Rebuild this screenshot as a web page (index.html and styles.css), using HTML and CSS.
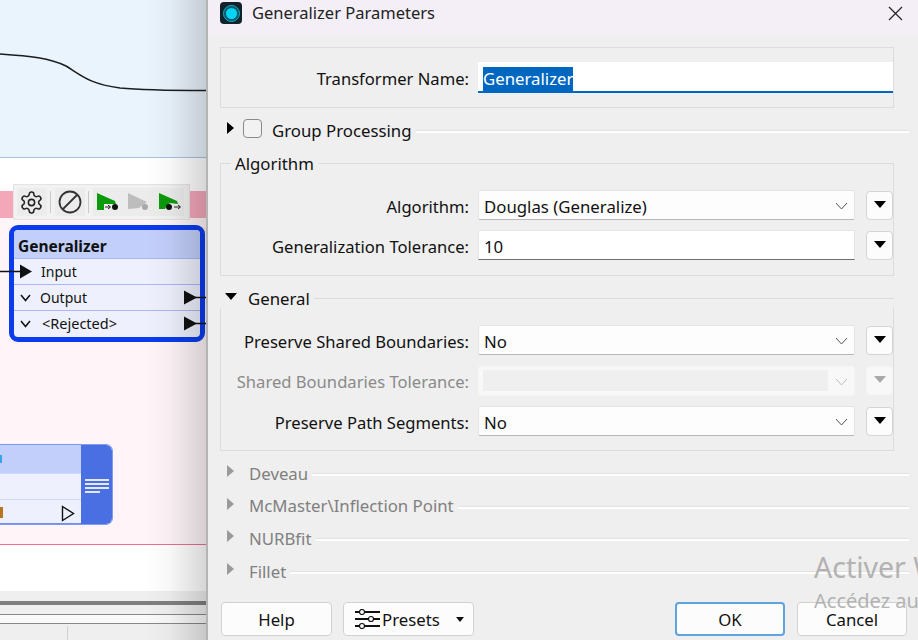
FILE: index.html
```html
<!DOCTYPE html>
<html lang="en">
<head>
    <meta charset="UTF-8">
    <title>Generalizer Parameters</title>
    <link rel="stylesheet" href="styles.css">
</head>
<body>
<div class="desktop">

    <!-- workbench canvas behind the dialog -->
    <div class="canvas">
        <div class="band-blue"></div>
        <div class="band-white"></div>
        <div class="band-pink"></div>
        <div class="band-bookmark"></div>
        <div class="band-white2"></div>
        <div class="band-gray"></div>
        <div class="band-dark"></div>
        <div class="band-gray2"></div>
        <div class="band-light"></div>
        <div class="band-status"><span></span></div>

        <svg class="wires" width="208" height="640" viewBox="0 0 208 640">
            <path d="M0 54 C30 56 50 58 66 66 C82 76 90 84 120 88 C140 90 170 90.5 208 90.5" fill="none" stroke="#1c1c1c" stroke-width="1.5"/>
        </svg>

        <div class="toolbar">
            <div class="tool">
                <svg width="25" height="25" viewBox="0 0 24 24" fill="none" stroke="#222" stroke-width="1.5">
                    <path d="M12.22 2h-.44a2 2 0 0 0-2 2v.18a2 2 0 0 1-1 1.73l-.43.25a2 2 0 0 1-2 0l-.15-.08a2 2 0 0 0-2.73.73l-.22.38a2 2 0 0 0 .73 2.73l.15.1a2 2 0 0 1 1 1.72v.51a2 2 0 0 1-1 1.74l-.15.09a2 2 0 0 0-.73 2.73l.22.38a2 2 0 0 0 2.73.73l.15-.08a2 2 0 0 1 2 0l.43.25a2 2 0 0 1 1 1.73V20a2 2 0 0 0 2 2h.44a2 2 0 0 0 2-2v-.18a2 2 0 0 1 1-1.73l.43-.25a2 2 0 0 1 2 0l.15.08a2 2 0 0 0 2.73-.73l.22-.39a2 2 0 0 0-.73-2.73l-.15-.08a2 2 0 0 1-1-1.74v-.5a2 2 0 0 1 1-1.74l.15-.09a2 2 0 0 0 .73-2.73l-.22-.38a2 2 0 0 0-2.73-.73l-.15.08a2 2 0 0 1-2 0l-.43-.25a2 2 0 0 1-1-1.73V4a2 2 0 0 0-2-2z"/>
                    <circle cx="12" cy="12" r="3"/>
                </svg>
            </div>
            <div class="tool-sep"></div>
            <div class="tool">
                <svg width="24" height="24" viewBox="0 0 24 24" fill="none" stroke="#333" stroke-width="1.8">
                    <circle cx="12" cy="12" r="10.5"/>
                    <path d="M5 19 L19 5"/>
                </svg>
            </div>
            <div class="tool-sep"></div>
            <div class="tool-group">
                <svg width="26" height="20" viewBox="0 0 26 20">
                    <path d="M1 1 L19 9 L20 12 L8 12 L8 18 L1 18 Z" fill="#0b9a0b"/>
                    <path d="M9 15 H14 M12 13 L14.500 15 L12 17" fill="none" stroke="#222" stroke-width="1"/>
                    <circle cx="19" cy="15" r="3" fill="#111"/>
                </svg>
                <svg width="26" height="20" viewBox="0 0 26 20">
                    <path d="M1 1 L20 10 L12 16 L1 17 Z" fill="#bdbdbd"/>
                    <circle cx="18" cy="15" r="3" fill="#a8a8a8"/>
                </svg>
                <svg width="26" height="20" viewBox="0 0 26 20">
                    <path d="M1 1 L19 9 L20 12 L12 11 L8 15 L7 17 L1 17 Z" fill="#0b9a0b"/>
                    <circle cx="11" cy="15" r="3" fill="#111"/>
                    <path d="M16 15 H22 M20 13 L22.500 15 L20 17" fill="none" stroke="#222" stroke-width="1"/>
                </svg>
            </div>
        </div>

        <div class="node node-main">
            <div class="node-title">Generalizer</div>
            <div class="port"><span class="port-name port-in">Input</span></div>
            <div class="port">
                <svg class="chev" width="11" height="8" viewBox="0 0 11 8"><path d="M1 1 L5.500 6.500 L10 1" fill="none" stroke="#111" stroke-width="1.500"/></svg>
                <span class="port-name">Output</span>
            </div>
            <div class="port">
                <svg class="chev" width="11" height="8" viewBox="0 0 11 8"><path d="M1 1 L5.500 6.500 L10 1" fill="none" stroke="#111" stroke-width="1.500"/></svg>
                <span class="port-name port-rej">&lt;Rejected&gt;</span>
            </div>
        </div>
        <svg class="wires" width="208" height="640" viewBox="0 0 208 640">
            <path d="M0 271.500 H22 M190 297.500 H208 M190 323.500 H208" stroke="#111" stroke-width="1.500"/>
            <path d="M20 264.500 L32 271.500 L20 278.500 Z M184 290.500 L197 297.500 L184 304.500 Z M184 316.500 L197 323.500 L184 330.500 Z" fill="#111"/>
        </svg>

        <div class="node-cut">
            <div class="cut-main">
                <div class="cut-title"><span class="speck-blue"></span></div>
                <div class="cut-row"></div>
                <div class="cut-row cut-last">
                    <span class="speck-orange"></span>
                    <svg width="14" height="17" viewBox="0 0 14 17"><path d="M1.500 1.500 L12.500 8.500 L1.500 15.500 Z" fill="none" stroke="#111" stroke-width="1.400"/></svg>
                </div>
            </div>
            <div class="cut-side">
                <span></span><span></span><span></span><span class="short"></span>
            </div>
        </div>

        <div class="shade"></div>
    </div>

    <!-- parameters dialog -->
    <div class="dialog">
        <div class="titlebar">
            <div class="app-icon"><span></span></div>
            <div class="title-text">Generalizer Parameters</div>
            <svg class="close" width="15" height="15" viewBox="0 0 15 15"><path d="M1 1 L14 14 M14 1 L1 14" stroke="#222" stroke-width="1.200"/></svg>
        </div>

        <div class="content">
            <div class="box box-name">
                <label class="lbl">Transformer Name:</label>
                <div class="name-input"><span class="selected">Generalizer</span></div>
            </div>

            <div class="section sec-group">
                <span class="arrow-right"></span>
                <span class="checkbox"></span>
                <span class="sec-label sec-dark">Group Processing</span>
                <span class="sec-line"></span>
            </div>

            <div class="box box-algo">
                <div class="legend">Algorithm</div>
                <div class="row">
                    <label class="lbl">Algorithm:</label>
                    <div class="field select">Douglas (Generalize)<svg class="chevron" width="13" height="8" viewBox="0 0 13 8"><path d="M1 1 L6.500 7 L12 1" fill="none" stroke="#555" stroke-width="1"/></svg></div>
                    <div class="menu-btn"><span class="arrow-down"></span></div>
                </div>
                <div class="row">
                    <label class="lbl">Generalization Tolerance:</label>
                    <div class="field text">10</div>
                    <div class="menu-btn"><span class="arrow-down"></span></div>
                </div>
            </div>

            <div class="section sec-general">
                <span class="arrow-open"></span>
                <span class="sec-label sec-dark">General</span>
                <span class="sec-rule"></span>
            </div>
            <div class="box box-general">
                <div class="row">
                    <label class="lbl">Preserve Shared Boundaries:</label>
                    <div class="field select">No<svg class="chevron" width="13" height="8" viewBox="0 0 13 8"><path d="M1 1 L6.500 7 L12 1" fill="none" stroke="#555" stroke-width="1"/></svg></div>
                    <div class="menu-btn"><span class="arrow-down"></span></div>
                </div>
                <div class="row">
                    <label class="lbl lbl-off">Shared Boundaries Tolerance:</label>
                    <div class="field select field-off"><span class="off-fill"></span><svg class="chevron" width="13" height="8" viewBox="0 0 13 8"><path d="M1 1 L6.500 7 L12 1" fill="none" stroke="#bbb" stroke-width="1"/></svg></div>
                    <div class="menu-btn btn-off"><span class="arrow-down"></span></div>
                </div>
                <div class="row">
                    <label class="lbl">Preserve Path Segments:</label>
                    <div class="field select">No<svg class="chevron" width="13" height="8" viewBox="0 0 13 8"><path d="M1 1 L6.500 7 L12 1" fill="none" stroke="#555" stroke-width="1"/></svg></div>
                    <div class="menu-btn"><span class="arrow-down"></span></div>
                </div>
            </div>

            <div class="collapsed">
                <div class="section"><span class="arrow-right arrow-off"></span><span class="sec-label">Deveau</span><span class="sec-line"></span></div>
                <div class="section"><span class="arrow-right arrow-off"></span><span class="sec-label">McMaster\Inflection Point</span><span class="sec-line"></span></div>
                <div class="section"><span class="arrow-right arrow-off"></span><span class="sec-label">NURBfit</span><span class="sec-line"></span></div>
                <div class="section"><span class="arrow-right arrow-off"></span><span class="sec-label">Fillet</span><span class="sec-line"></span></div>
            </div>

            <div class="footer">
                <button class="btn btn-help">Help</button>
                <button class="btn btn-presets">
                    <svg width="25" height="20" viewBox="0 0 25 20" fill="none" stroke="#111">
                        <path d="M0 3 H25 M0 10 H25 M0 17 H25" stroke-width="2"/>
                        <circle cx="7" cy="3" r="2.500" fill="#fff" stroke-width="1.200"/>
                        <circle cx="16" cy="10" r="2.500" fill="#fff" stroke-width="1.200"/>
                        <circle cx="7" cy="17" r="2.500" fill="#fff" stroke-width="1.200"/>
                    </svg>
                    <span>Presets</span>
                    <span class="caret"></span>
                </button>
                <div class="spacer"></div>
                <button class="btn btn-ok">OK</button>
                <button class="btn btn-cancel">Cancel</button>
            </div>
        </div>

        <div class="watermark">
            <div class="wm-big">Activer W</div>
            <div class="wm-small">Accédez au</div>
        </div>
    </div>
</div>
</body>
</html>
```

FILE: styles.css
```css
* {
    box-sizing: border-box;
}
html, body {
    margin: 0;
    padding: 0;
}
body {
    font-family: "Noto Sans", "Open Sans", sans-serif;
    font-size: 16px;
    color: #111;
    background-color: #efefef;
    overflow: hidden;
}
.desktop {
    display: flex;
    width: 918px;
    height: 640px;
    overflow: hidden;
}

/* canvas */
.canvas {
    position: relative;
    display: flex;
    flex-direction: column;
    flex: none;
    width: 208px;
    height: 640px;
    overflow: hidden;
    border-right: 2px solid #b4b4b4;
}
.band-blue {
    height: 158px;
    background-color: #eaf4fd;
    border-bottom: 1px solid #a5c3e0;
}
.band-white {
    height: 33px;
    background-color: #fff;
}
.band-pink {
    height: 27px;
    background-color: #f5a7ba;
}
.band-bookmark {
    height: 327px;
    background-color: #fff5f8;
    border-bottom: 1px solid #ee6d90;
}
.band-white2 {
    height: 46px;
    background-color: #fff;
}
.band-gray {
    height: 10px;
    background-color: #efefef;
}
.band-dark {
    height: 4px;
    background-color: #808080;
}
.band-gray2 {
    height: 10px;
    background-color: #f0f0f0;
    border-bottom: 1px solid #888;
}
.band-light {
    height: 9px;
    background-color: #f9f9f9;
    border-bottom: 1px solid #888;
}
.band-status {
    flex: 1;
    background-color: #efefef;
    padding-left: 67px;
    padding-top: 2px;
}
.band-status span {
    display: block;
    width: 1px;
    height: 14px;
    background-color: #d0d0d0;
}
.wires {
    position: absolute;
    left: 0;
    top: 0;
    z-index: 3;
}
.shade {
    position: absolute;
    top: 0;
    right: 0;
    bottom: 0;
    width: 60px;
    z-index: 4;
    background: linear-gradient(to right, rgba(0,0,0,0), rgba(0,0,0,0.03) 40%, rgba(0,0,0,0.16));
}

.toolbar {
    position: absolute;
    left: 13px;
    top: 184px;
    width: 177px;
    height: 36px;
    display: flex;
    align-items: center;
    padding: 3px;
    background-color: #f2f2f2;
    border: 1px solid #e4e4e4;
}
.tool {
    width: 30px;
    height: 28px;
    display: flex;
    align-items: center;
    justify-content: center;
    background-color: #ececec;
}
.tool:first-child svg {
    margin-left: -2px;
}
.tool-sep {
    width: 1px;
    height: 22px;
    margin: 0 4px 0 3px;
    background-color: #c8c8c8;
}
.tool-group {
    display: flex;
    align-items: center;
    gap: 5px;
    height: 28px;
    padding-left: 3px;
    background-color: #ececec;
}

.node {
    position: absolute;
    left: 9px;
    top: 225px;
    width: 196px;
    height: 117px;
    background-color: #eef1fd;
    border: 5px solid #0a3ced;
    border-radius: 9px;
    overflow: hidden;
}
.node-title {
    height: 29px;
    padding: 5px 0 0 4px;
    font-size: 15.500px;
    font-weight: 700;
    line-height: 22px;
    background-color: #c3cffb;
    border-bottom: 1px solid #a8b8f5;
}
.port {
    display: flex;
    align-items: center;
    height: 26px;
    font-size: 14px;
    border-bottom: 1px solid #a8b8f5;
}
.port:last-child {
    border-bottom: none;
}
.chev {
    margin-left: 6px;
}
.port-name {
    position: absolute;
    left: 26px;
}
.port-in {
    left: 27px;
}
.port-rej {
    left: 28px;
    margin-top: -2px;
    font-size: 14.500px;
}

.node-cut {
    position: absolute;
    left: -10px;
    top: 444px;
    width: 123px;
    height: 81px;
    display: flex;
    border: 1px solid #7f9bef;
    border-radius: 0 7px 7px 0;
    overflow: hidden;
}
.cut-main {
    position: relative;
    flex: 1;
    background-color: #eef1fd;
    border-bottom: 1px solid #6f8ee8;
}
.cut-title {
    height: 29px;
    background-color: #c3cffb;
    border-bottom: 1px solid #cfd8fa;
}
.cut-row {
    height: 26px;
    border-bottom: 1px solid #cfd8fa;
}
.cut-last {
    display: flex;
    align-items: center;
    justify-content: flex-end;
    padding-right: 6px;
    border-bottom: none;
}
.speck-blue {
    position: absolute;
    left: 9px;
    top: 10px;
    width: 2px;
    height: 8px;
    background-color: #3aa0f0;
}
.speck-orange {
    position: absolute;
    left: 9px;
    top: 62px;
    width: 3px;
    height: 11px;
    background-color: #b8741e;
}
.cut-side {
    width: 31px;
    display: flex;
    flex-direction: column;
    gap: 2px;
    padding: 34px 3px 0 4px;
    background-color: #4a6fe3;
}
.cut-side span {
    display: block;
    height: 2px;
    background-color: #e4e8f5;
}
.cut-side .short {
    width: 15px;
}

/* dialog */
.dialog {
    position: relative;
    flex: 1;
    min-width: 0;
    background-color: #efefef;
}
.titlebar {
    display: flex;
    align-items: center;
    height: 35px;
    padding: 0 15px 9px 12px;
    background-color: #f4eff7;
}
.app-icon {
    width: 22px;
    height: 22px;
    display: flex;
    align-items: center;
    justify-content: center;
    background-color: #10232b;
    border-radius: 4px;
}
.app-icon span {
    width: 15px;
    height: 15px;
    border-radius: 50%;
    background-color: #05d5f5;
    border: 2px solid #0a5e70;
    outline: 1px solid #0bb8d4;
}
.title-text {
    flex: 1;
    margin: -2px 0 0 10px;
    font-size: 16.500px;
    color: #222;
}
.content {
    padding: 12px 24px 0 12px;
}
.box {
    border: 1px solid #dcdcdc;
    width: 674px;
}
.lbl {
    flex: none;
    width: 248px;
    margin-top: 2px;
    text-align: right;
    font-size: 16.600px;
    white-space: nowrap;
}
.lbl-off {
    color: #8a8a8a;
}
.box-name {
    display: flex;
    align-items: center;
    height: 61px;
}
.name-input {
    width: 415px;
    height: 31px;
    margin-left: 9px;
    padding: 5px 0 0 5px;
    font-size: 16.800px;
    background-color: #fff;
    border-bottom: 2px solid #0067c0;
}
.selected {
    background-color: #0067c0;
    color: #fff;
    display: inline-block;
    height: 24px;
    line-height: 24px;
}
.section {
    display: flex;
    align-items: center;
    position: relative;
    height: 22px;
    width: 689px;
    padding-left: 29px;
    font-size: 16.800px;
}
.sec-group {
    margin-top: 11px;
    padding-left: 23px;
}
.sec-label {
    color: #808080;
    white-space: nowrap;
}
.sec-dark {
    color: #111;
}
.sec-line {
    flex: 1;
    height: 3px;
    margin: 3px 0 0 4px;
    background-color: #fff;
    border-top: 1px solid #e2e2e2;
}
.arrow-right {
    position: absolute;
    left: 7px;
    top: 3px;
    border-left: 7px solid #000;
    border-top: 6px solid transparent;
    border-bottom: 6px solid transparent;
}
.arrow-off {
    border-left-color: #9a9a9a;
}
.checkbox {
    align-self: flex-start;
    width: 19px;
    height: 19px;
    margin-right: 10px;
    border: 1px solid #8a8a8a;
    border-radius: 4px;
    background-color: #f2f2f2;
}
.box-algo {
    position: relative;
    height: 113px;
    margin-top: 22px;
    padding-top: 26px;
}
.legend {
    position: absolute;
    left: 10px;
    top: -11px;
    padding: 0 5px 0 4px;
    font-size: 16.800px;
    line-height: 22px;
    background-color: #efefef;
}
.row {
    display: flex;
    align-items: center;
    height: 30px;
    margin-bottom: 10px;
}
.field {
    position: relative;
    width: 377px;
    height: 30px;
    margin-left: 9px;
    padding: 1px 0 0 5px;
    font-size: 16.800px;
    line-height: 29px;
    background-color: #fdfdfd;
    border: 1px solid #e4e4e4;
    border-bottom: 1px solid #b8b8b8;
    border-radius: 2px;
}
.text {
    background-color: #fff;
    border-bottom: 1px solid #6e6e6e;
    border-radius: 0;
}
.chevron {
    position: absolute;
    right: 6px;
    top: 11px;
}
.field-off {
    background-color: #f8f8f8;
    border-color: #f4f4f4;
}
.off-fill {
    display: block;
    width: 345px;
    height: 21px;
    margin: 2px 0 0 -1px;
    background-color: #efefef;
}
.menu-btn {
    flex: none;
    width: 27px;
    height: 29px;
    margin-left: 11px;
    display: flex;
    justify-content: center;
    padding-top: 9px;
    background-color: #fcfcfc;
    border: 1px solid #d4d4d4;
    border-radius: 4px;
}
.arrow-down {
    width: 0;
    height: 0;
    border-top: 7px solid #000;
    border-left: 6px solid transparent;
    border-right: 6px solid transparent;
}
.btn-off {
    border-color: #f4f4f4;
    background-color: #f8f8f8;
}
.btn-off .arrow-down {
    border-top-color: #aaa;
}
.sec-general {
    margin-top: 11px;
    width: 674px;
    height: 22px;
    padding-left: 28px;
}
.arrow-open {
    position: absolute;
    left: 5px;
    top: 6px;
    border-top: 7px solid #000;
    border-left: 6px solid transparent;
    border-right: 6px solid transparent;
}
.sec-rule {
    flex: 1;
    height: 1px;
    margin: 1px 0 0 4px;
    background-color: #dcdcdc;
}
.box-general {
    height: 143px;
    padding-top: 17px;
    border-top: none;
    margin-top: -1px;
}
.box-general .row {
    margin-bottom: 10.500px;
}
.collapsed {
    display: flex;
    flex-direction: column;
    gap: 10.700px;
    margin-top: 11px;
}
.footer {
    display: flex;
    gap: 11px;
    width: 686px;
    margin: 20px 0 0 1px;
}
.btn {
    display: flex;
    align-items: center;
    justify-content: center;
    gap: 2px;
    width: 111px;
    height: 34px;
    padding: 0;
    font-family: inherit;
    font-size: 16.800px;
    color: #111;
    background-color: #fcfcfc;
    border: 1px solid #d2d2d2;
    border-radius: 4px;
}
.btn-presets {
    width: 131px;
    justify-content: flex-start;
    padding-left: 11px;
}
.caret {
    width: 0;
    height: 0;
    margin-left: 14px;
    border-top: 5px solid #111;
    border-left: 4px solid transparent;
    border-right: 4px solid transparent;
}
.spacer {
    flex: 1;
}
.btn-ok {
    width: 110px;
    border: 2px solid #5fa3df;
}
.btn-cancel {
    width: 110px;
    margin-left: 1px;
}
.watermark {
    position: absolute;
    left: 606px;
    top: 548px;
    color: #a8a8a8;
    white-space: nowrap;
    opacity: 0.85;
    pointer-events: none;
}
.wm-big {
    font-size: 28.500px;
    line-height: 38px;
}
.wm-small {
    margin-top: 1px;
    font-size: 20px;
    line-height: 28px;
}
```
